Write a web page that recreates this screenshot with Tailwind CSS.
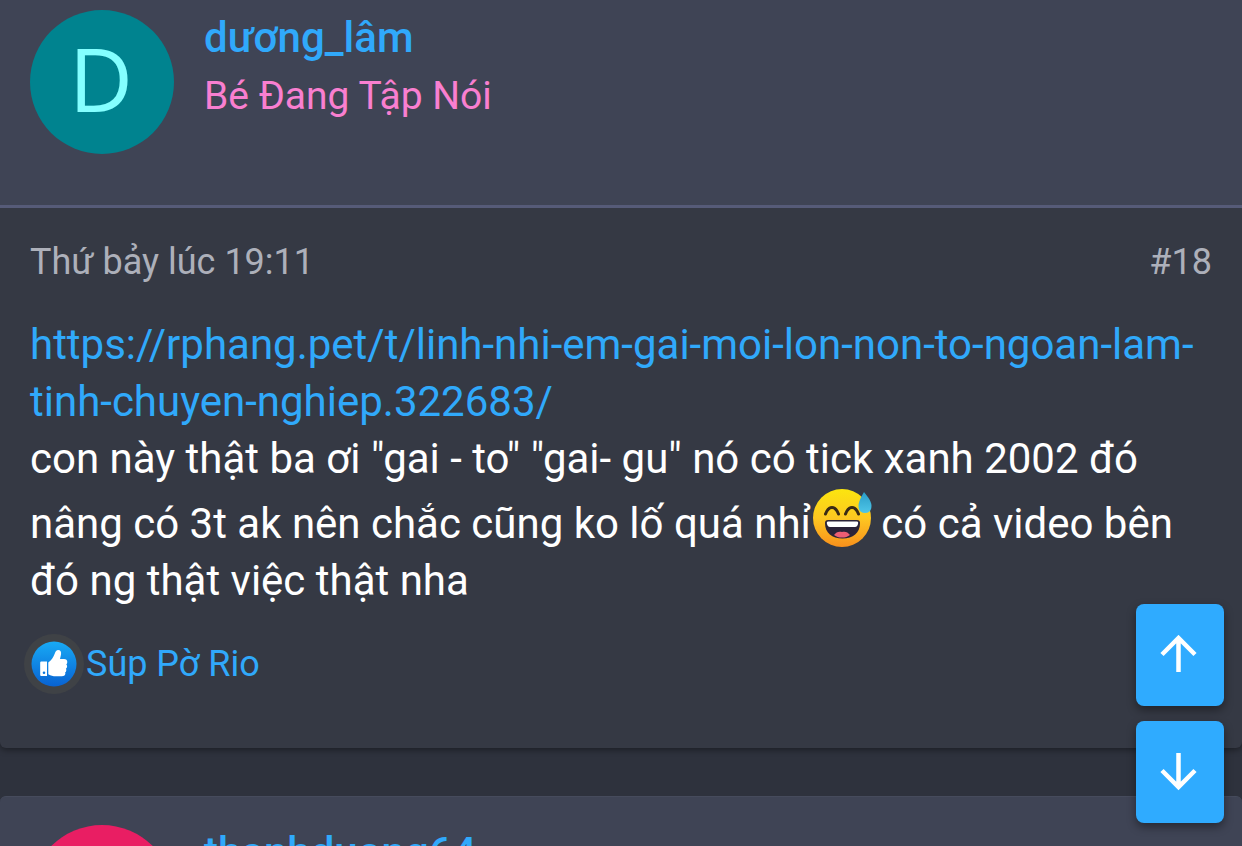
<!DOCTYPE html>
<html lang="vi">
<head>
    <meta charset="UTF-8">
    <meta name="viewport" content="width=device-width, initial-scale=1.0">
    <title>Thread - #18</title>
    <script src="https://cdn.jsdelivr.net/npm/@tailwindcss/browser@4"></script>
</head>
<body class="h-screen overflow-hidden bg-[#2e323d] font-['Roboto',sans-serif] text-white">
    <main class="flex flex-col gap-12">
        <article class="rounded-b-md bg-[#353944] shadow-[0_2px_6px_rgba(0,0,0,0.4)]">
            <header class="flex gap-[30px] border-b-3 border-[#565b78] bg-[#3f4455] px-[30px] pt-[10px] pb-[51px]">
                <a href="#" class="flex size-36 shrink-0 items-center justify-center rounded-full bg-[#00838f] pr-0.5 pb-2 font-['Open_Sans',sans-serif] text-[88px] leading-none text-[#84ffff]">D</a>
                <div>
                    <h4 class="text-[42px] leading-[56px] font-medium"><a href="#" class="text-[#30a9fb]">dương_lâm</a></h4>
                    <h5 class="text-[39px] leading-[60px] text-[#f97fd0]">Bé Đang Tập Nói</h5>
                </div>
            </header>
            <div class="px-[30px] pt-[30px] pb-[54px]">
                <div class="flex justify-between text-[36px] leading-[48px] text-[#adb0ba]">
                    <time>Thứ bảy lúc 19:11</time>
                    <a href="#">#18</a>
                </div>
                <div class="pt-[30px] text-[42px] leading-[57px]">
                    <a href="#" class="text-[#30a9fb]">https://rphang.pet/t/linh-nhi-em-gai-moi-lon-non-to-ngoan-lam-tinh-chuyen-nghiep.322683/</a><br>
                    con này thật ba ơi "gai - to" "gai- gu" nó có tick xanh 2002 đó nâng có 3t ak nên chắc cũng ko lố quá nhỉ<svg class="mt-px -mr-0.5 ml-0.5 inline-block size-[60px] align-text-bottom" viewBox="0 0 60 60" role="img" aria-label="😅">
                        <defs>
                            <linearGradient id="face" x1="0" y1="0" x2="0" y2="1">
                                <stop offset="0" stop-color="#fbe50f"/>
                                <stop offset="0.5" stop-color="#fdc721"/>
                                <stop offset="1" stop-color="#f8901c"/>
                            </linearGradient>
                            <linearGradient id="drop" x1="0" y1="0" x2="0" y2="1">
                                <stop offset="0" stop-color="#2a9dc8"/>
                                <stop offset="1" stop-color="#4fc6e8"/>
                            </linearGradient>
                        </defs>
                        <circle cx="29" cy="30" r="29" fill="url(#face)"/>
                        <path d="M12.500 26c1.500-4 4-6.500 6.500-6.500s5 2.500 6.500 6.500M32.500 26c1.500-4 4-6.500 6.500-6.500s5 2.500 6.500 6.500" fill="none" stroke="#3a2a15" stroke-width="3" stroke-linecap="round"/>
                        <path d="M15 32h29c2 0 3 1 3 3 0 10-7 15.500-17.500 15.500S12 45 12 35c0-2 1-3 3-3z" fill="#2b2338"/>
                        <path d="M15 33.500h29c1 0 1.500 1 1 2.500-.5 2-1.500 3-3 3H17c-1.500 0-2.500-1-3-3-.5-1.500 0-2.500 1-2.500z" fill="#fff"/>
                        <path d="M21 47c2-3 5-4 8-3 3-1 6 0 8 3-2 1.700-5 2.600-8 2.600S23 48.700 21 47z" fill="#ee5d73"/>
                        <path d="M51 4c5 6 7.500 10 7.500 14 0 4.500-2.500 7-6.500 7s-6.500-2.500-6.500-7c0-4 2-8 5.500-14z" fill="url(#drop)"/>
                    </svg> có cả video bên đó ng thật việc thật nha
                </div>
                <div class="-ml-1.5 flex items-center gap-0.5 pt-[25px] text-[36px] leading-[60px]">
                    <span class="flex size-[60px] items-center justify-center rounded-full bg-[#3f4246]">
                        <svg class="size-[46px]" viewBox="0 0 46 46" role="img" aria-label="Like">
                            <defs>
                                <linearGradient id="like" x1="0" y1="0" x2="0" y2="1">
                                    <stop offset="0" stop-color="#18aaf5"/>
                                    <stop offset="1" stop-color="#0862d2"/>
                                </linearGradient>
                            </defs>
                            <circle cx="23" cy="23" r="22.500" fill="url(#like)"/>
                            <path fill-rule="evenodd" d="M10.500 20.500h5.500V35h-5.500c-.8 0-1.300-.5-1.300-1.300V21.800c0-.8.500-1.300 1.300-1.300zM13 30.500a1.300 1.300 0 1 0 0 2.600 1.300 1.300 0 0 0 0-2.600z" fill="#fff"/>
                            <path d="M17.300 21.500c3-2 5-5 6.500-9 .7-2.300 1.700-3.500 3.300-3.500 2.400 0 3.400 1.900 2.900 4.500L29 18h4c2.200 0 3.300 1.300 3.300 2.900 0 1.100-.4 1.900-1 2.400.5.500.8 1.200.8 2 0 1.100-.5 1.900-1.200 2.400.4.500.5 1.100.4 1.800-.1 1-.5 1.700-1.200 2 .3.500.3 1 .2 1.600-.4 1.700-1.500 2.100-3.400 2.100h-6c-3 0-5-.5-7.600-2z" fill="#fff"/>
                        </svg>
                    </span>
                    <a href="#" class="text-[#30a9fb]">Súp Pờ Rio</a>
                </div>
            </div>
        </article>
        <article class="rounded-t-md bg-[#353944]">
            <header class="flex gap-[30px] rounded-t-md border-t border-[#464b5c] bg-[#3f4455] px-[30px] pt-[28px] pb-[51px]">
                <a href="#" aria-label="thanhduong64" class="size-36 shrink-0 rounded-full bg-[#e91e63]"></a>
                <h4 class="text-[42px] leading-[56px] font-medium"><a href="#" class="text-[#30a9fb]">thanhduong64</a></h4>
            </header>
        </article>
    </main>
    <div class="fixed right-[18px] bottom-[23px] flex flex-col gap-[15px]">
        <button type="button" aria-label="Top" class="flex h-[102px] w-[88px] items-center justify-center rounded-lg bg-[#2fabff] shadow-[0_4px_10px_rgba(0,0,0,0.4)]">
            <svg class="size-10" viewBox="0 0 40 40" fill="none" stroke="#fff" stroke-width="4.500"><path d="M18.500 37V3M2 19.500 18.500 3 35 19.500"/></svg>
        </button>
        <button type="button" aria-label="Bottom" class="flex h-[102px] w-[88px] items-center justify-center rounded-lg bg-[#2fabff] shadow-[0_4px_10px_rgba(0,0,0,0.4)]">
            <svg class="size-10" viewBox="0 0 40 40" fill="none" stroke="#fff" stroke-width="4.500"><path d="M18.500 1v34M2 18.500 18.500 35 35 18.500"/></svg>
        </button>
    </div>
</body>
</html>
